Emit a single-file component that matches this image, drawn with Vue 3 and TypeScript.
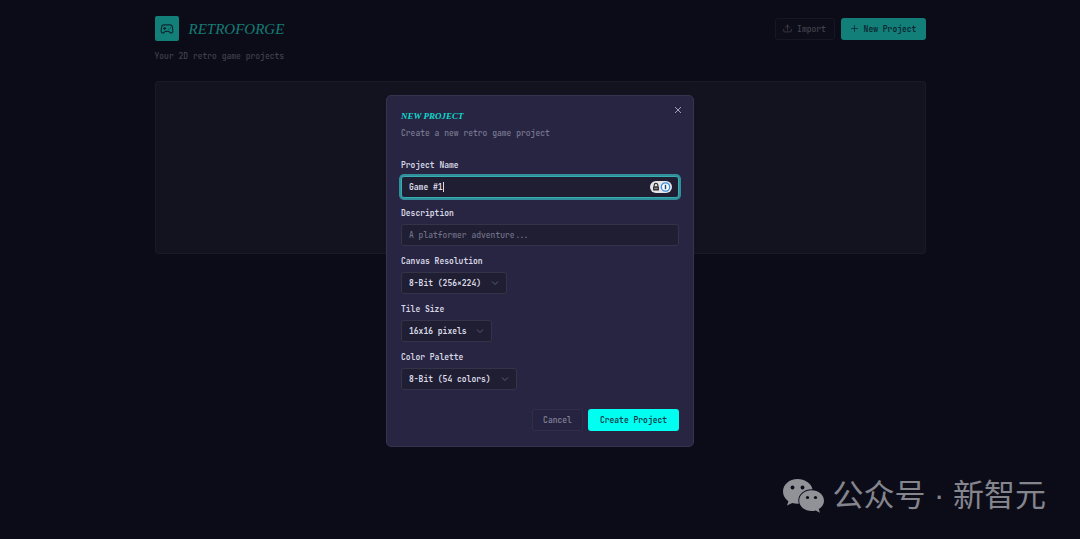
<script setup lang="ts">
import { computed, nextTick, onMounted, ref } from 'vue'

interface Choice {
  id: string
  label: string
  value: string
  size: string
}

const name = ref('Game #1')
const description = ref('')
const nameField = ref<HTMLInputElement | null>(null)
const caretStyle = computed(() => ({ left: `calc(8px + ${name.value.length}ch)` }))
const choices: Choice[] = [
  { id: 'resolution', label: 'Canvas Resolution', value: '8-Bit (256×224)', size: 'medium' },
  { id: 'tile', label: 'Tile Size', value: '16x16 pixels', size: 'small' },
  { id: 'palette', label: 'Color Palette', value: '8-Bit (54 colors)', size: 'large' },
]

onMounted(async () => {
  await nextTick()
  nameField.value?.focus()
})
</script>

<template>
  <div class="app">
    <div class="page">
      <header class="top">
        <div class="brand">
          <span class="logo">
            <svg viewBox="0 0 24 24" class="icon-logo">
              <path d="M6 11h4M8 9v4M15 12h.01M18 10h.01" />
              <path d="M17.3 5H6.7a4 4 0 0 0-4 3.6C2.6 9.400 2 14.500 2 16a3 3 0 0 0 3 3c1 0 1.500-.5 2-1l1.400-1.400A2 2 0 0 1 9.800 16h4.400a2 2 0 0 1 1.400.6L17 18c.5.5 1 1 2 1a3 3 0 0 0 3-3c0-1.500-.6-6.600-.7-7.400a4 4 0 0 0-4-3.600z" />
            </svg>
          </span>
          <h1>RETROFORGE</h1>
        </div>
        <div class="actions">
          <button type="button" class="btn import">
            <svg viewBox="0 0 24 24" class="icon"><path d="M12 16V3M6 9l6-6 6 6M2 14v5a2 2 0 0 0 2 2h16a2 2 0 0 0 2-2v-5" /></svg>
            Import
          </button>
          <button type="button" class="btn create dim">
            <svg viewBox="0 0 24 24" class="icon"><path d="M4 12h16M12 4v16" /></svg>
            New Project
          </button>
        </div>
      </header>
      <p class="tagline">Your 2D retro game projects</p>
      <main class="projects"></main>
    </div>

    <div class="overlay">
      <form class="dialog" role="dialog" aria-labelledby="dialog-title" @submit.prevent>
        <div class="dialog-head">
          <h2 id="dialog-title">NEW PROJECT</h2>
          <button type="button" class="close" aria-label="Close">
            <svg viewBox="0 0 8 8"><path d="M1 1l6 6M7 1L1 7" /></svg>
          </button>
        </div>
        <p class="intro">Create a new retro game project</p>

        <div class="field">
          <label for="name">Project Name</label>
          <div class="name-box">
            <input id="name" ref="nameField" v-model="name" type="text" autocomplete="off" spellcheck="false" />
            <span class="caret" :style="caretStyle"></span>
            <span class="vault">
              <svg viewBox="0 0 22 12">
                <rect width="22" height="12" rx="6" fill="#e6e6e8" />
                <path d="M4.200 5.500V4.200a1.800 1.800 0 0 1 3.600 0v1.300" fill="none" stroke="#333338" stroke-width="1.200" />
                <rect x="3" y="5.200" width="6" height="4.300" rx="0.600" fill="#333338" />
                <path d="M4.200 7.300h3.600" stroke="#c8c8cc" stroke-width="0.700" />
                <circle cx="15.500" cy="6" r="4.200" fill="#f5faff" stroke="#3c8ede" stroke-width="1.300" />
                <path d="M15.500 3.800v4.400" stroke="#24476e" stroke-width="1.400" />
              </svg>
            </span>
          </div>
        </div>

        <div class="field">
          <label for="description">Description</label>
          <input id="description" v-model="description" type="text" placeholder="A platformer adventure..." />
        </div>

        <div v-for="choice in choices" :key="choice.id" class="field">
          <label :for="choice.id">{{ choice.label }}</label>
          <div class="select-box" :class="choice.size">
            <select :id="choice.id">
              <option>{{ choice.value }}</option>
            </select>
            <svg viewBox="0 0 8 8" class="chevron"><path d="M1 2.500l3 3 3-3" /></svg>
          </div>
        </div>

        <footer class="dialog-foot">
          <button type="button" class="btn cancel">Cancel</button>
          <button type="submit" class="btn create">Create Project</button>
        </footer>
      </form>
    </div>

    <div class="watermark">
      <svg viewBox="0 0 42 36" class="wechat">
        <path fill="#919198" d="M15.500 1C7.300 1 1 6.500 1 13.500c0 4 2.100 7.400 5.400 9.700L5 27.500l5.200-2.600c1.700.5 3.500.8 5.400.8h1.200a11.200 11.200 0 0 1-.5-3.200c0-6.400 6-11.300 13.400-11.300h.8C29.200 5.300 23 1 15.500 1z" />
        <path fill="#919198" d="M42 22.700c0-5.800-5.600-10.400-12.400-10.400s-12.400 4.600-12.400 10.400S22.800 33 29.600 33c1.400 0 2.800-.2 4.100-.6l4.200 2.300-1.100-3.700c3.200-2 5.200-4.900 5.200-8.300z" />
        <g fill="#0c0c18">
          <circle cx="10.500" cy="9.500" r="1.900" />
          <circle cx="20.500" cy="9.500" r="1.900" />
          <circle cx="25.500" cy="19.500" r="1.600" />
          <circle cx="33.500" cy="19.500" r="1.600" />
        </g>
      </svg>
      <span>公众号 · 新智元</span>
    </div>
  </div>
</template>

<style>
body {
  margin: 0;
  background: #0c0c18;
}
</style>

<style scoped>
* {
  box-sizing: border-box;
}

.app {
  position: relative;
  min-height: 100vh;
  overflow: hidden;
  background: #0c0c18;
  font-family: "JetBrains Mono", "DejaVu Sans Mono", monospace;
  font-size: 8px;
  line-height: 12px;
  font-weight: 500;
}

h1,
h2,
p {
  margin: 0;
}

svg {
  display: block;
  flex: none;
}

.page {
  width: calc(100% - 48px);
  max-width: 771px;
  margin: 0 auto;
  padding-top: 16px;
}

.top,
.brand,
.actions {
  display: flex;
  align-items: center;
}

.top {
  justify-content: space-between;
}

.brand {
  gap: 10px;
}

.logo {
  display: grid;
  place-items: center;
  width: 24px;
  height: 25px;
  border-radius: 2px;
  background: #128078;
}

.icon-logo {
  width: 14px;
  height: 14px;
  fill: none;
  stroke: #0d2a35;
  stroke-width: 2;
  stroke-linecap: round;
  stroke-linejoin: round;
}

h1,
h2 {
  font-family: "Apple Chancery", "Liberation Serif", serif;
  font-style: italic;
}

h1 {
  font-size: 15px;
  line-height: 20px;
  font-weight: 400;
  color: #157c75;
}

.actions {
  gap: 6px;
}

.btn {
  display: inline-flex;
  align-items: center;
  justify-content: center;
  gap: 5px;
  height: 22px;
  padding: 0 8px;
  border: 1px solid transparent;
  border-radius: 3px;
  font: inherit;
  white-space: nowrap;
}

.icon {
  width: 9px;
  height: 9px;
  fill: none;
  stroke: currentColor;
  stroke-width: 2;
  stroke-linecap: round;
  stroke-linejoin: round;
}

.import {
  width: 60px;
  border-color: #171724;
  background: #0d0d19;
  color: #454450;
}

.create {
  width: 91px;
  background: #00fff0;
  color: #123d4c;
  font-weight: 700;
}

.create.dim {
  width: 85px;
  background: #128078;
  color: #0b2632;
}

.tagline {
  margin-top: 9px;
  color: #42414d;
}

.projects {
  height: 173px;
  margin-top: 19px;
  border: 1px solid #1a1926;
  border-radius: 3px;
  background: #13121f;
}

.overlay {
  position: absolute;
  inset: 0;
  display: flex;
  align-items: center;
  justify-content: center;
  padding-top: 2px;
}

.dialog {
  width: 308px;
  max-width: 100%;
  padding: 14px 14px 15px;
  border: 1px solid #35344e;
  border-radius: 5px;
  background: #272542;
}

.dialog-head {
  display: flex;
  justify-content: space-between;
}

h2 {
  font-size: 9px;
  line-height: 12px;
  font-weight: 700;
  color: #12d8ce;
}

.close {
  width: 8px;
  height: 8px;
  margin: -4px -3px 0 0;
  padding: 0;
  border: 0;
  background: none;
}

.close svg {
  width: 8px;
  height: 8px;
  fill: none;
  stroke: #a3a2b4;
}

.intro {
  margin: 5px 0 20px;
  color: #7d7b93;
}

.field {
  margin-bottom: 9px;
}

label {
  display: block;
  margin-bottom: 5px;
  color: #d8d7e4;
  font-weight: 700;
}

input,
select {
  display: block;
  width: 100%;
  height: 22px;
  margin: 0;
  padding: 0 7px;
  border: 1px solid #34334a;
  border-radius: 3px;
  background: #1f1e33;
  color: #dddce8;
  font: inherit;
  font-weight: 600;
  outline: none;
}

input::placeholder {
  color: #74728a;
  font-weight: 500;
  opacity: 1;
}

.name-box {
  position: relative;
}

.name-box input {
  border-color: #35aeb2;
  box-shadow: 0 0 0 2px #308f9b;
  caret-color: transparent;
}

.caret {
  position: absolute;
  top: 6px;
  width: 1px;
  height: 10px;
  background: #dddce8;
}

.vault {
  position: absolute;
  top: 5px;
  right: 7px;
}

.vault svg {
  width: 22px;
  height: 12px;
}

.select-box {
  position: relative;
}

.select-box.small {
  width: 91px;
}

.select-box.medium {
  width: 106px;
}

.select-box.large {
  width: 116px;
}

select {
  appearance: none;
}

.chevron {
  position: absolute;
  top: 7px;
  right: 8px;
  width: 8px;
  height: 8px;
  fill: none;
  stroke: #5d5b73;
  pointer-events: none;
}

.dialog-foot {
  display: flex;
  justify-content: flex-end;
  gap: 5px;
  margin-top: 19px;
}

.cancel {
  width: 51px;
  border-color: #302e49;
  background: #252340;
  color: #858398;
}

.watermark {
  position: absolute;
  right: 34px;
  bottom: 22px;
  display: flex;
  align-items: center;
  gap: 8px;
  color: #85858e;
  font-family: "Liberation Sans", "Noto Sans CJK SC", sans-serif;
  font-size: 31px;
  line-height: 42px;
  font-weight: 400;
  white-space: nowrap;
}

.wechat {
  width: 42px;
  height: 36px;
}
</style>
